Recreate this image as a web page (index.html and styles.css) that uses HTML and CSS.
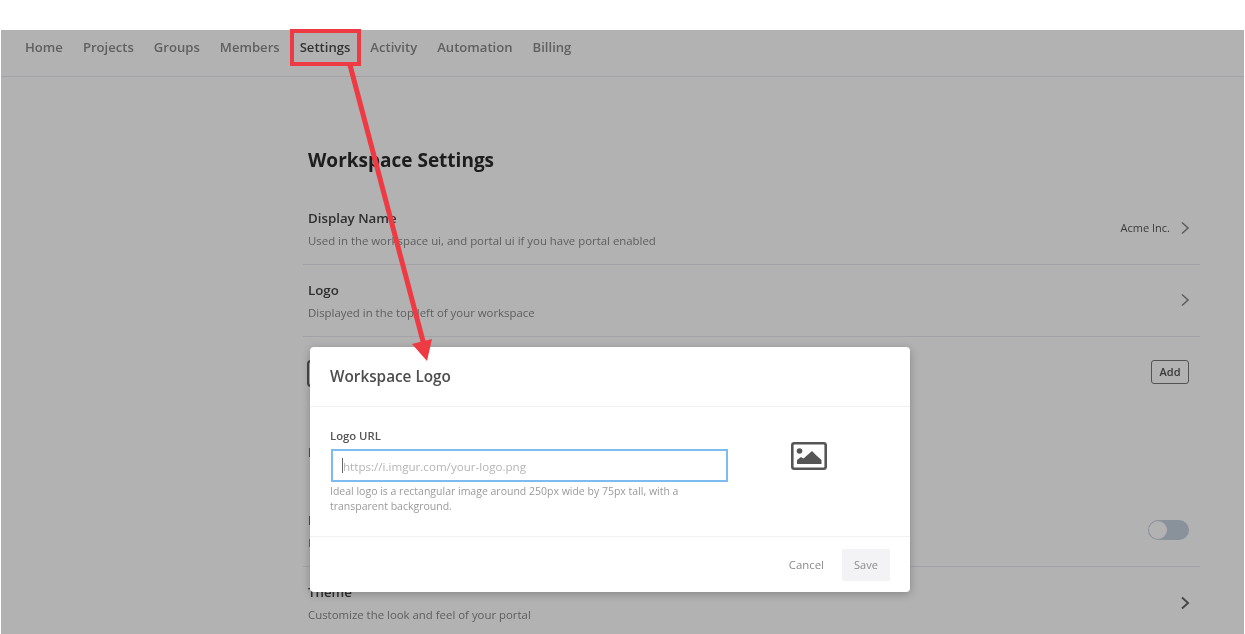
FILE: index.html
```html
<!DOCTYPE html>
<html lang="en">
<head>
    <meta charset="UTF-8">
    <meta name="viewport" content="width=device-width, initial-scale=1.0">
    <title>Workspace Settings</title>
    <link rel="stylesheet" href="styles.css">
</head>
<body>
    <div class="shot">
        <div class="app">
            <div class="nav">
                <a href="#">Home</a>
                <a href="#">Projects</a>
                <a href="#">Groups</a>
                <a href="#">Members</a>
                <a href="#" class="active">Settings</a>
                <a href="#">Activity</a>
                <a href="#">Automation</a>
                <a href="#">Billing</a>
            </div>

            <div class="content">
                <h1>Workspace Settings</h1>

                <div class="row">
                    <div>
                        <div class="row-title">Display Name</div>
                        <div class="row-desc">Used in the workspace ui, and portal ui if you have portal enabled</div>
                    </div>
                    <div class="row-side">
                        <span>Acme Inc.</span>
                        <svg class="chevron" viewBox="0 0 10 14"><path d="M2 1.5 8 7l-6 5.5"/></svg>
                    </div>
                </div>

                <div class="row">
                    <div>
                        <div class="row-title">Logo</div>
                        <div class="row-desc">Displayed in the top left of your workspace</div>
                    </div>
                    <div class="row-side">
                        <svg class="chevron" viewBox="0 0 10 14"><path d="M2 1.5 8 7l-6 5.5"/></svg>
                    </div>
                </div>

                <div class="row row-plain">
                    <div class="logo-box"></div>
                    <button class="add-btn">Add</button>
                </div>

                <div class="row row-plain row-tall">
                    <div class="row-title">Portal</div>
                </div>

                <div class="row">
                    <div>
                        <div class="row-title">Portal</div>
                        <div class="row-desc">Portal</div>
                    </div>
                    <div class="toggle"><span class="knob"></span></div>
                </div>

                <div class="row">
                    <div>
                        <div class="row-title">Theme</div>
                        <div class="row-desc">Customize the look and feel of your portal</div>
                    </div>
                    <div class="row-side row-side-theme">
                        <svg class="chevron chevron-dark" viewBox="0 0 10 14"><path d="M2 1.5 8 7l-6 5.5"/></svg>
                    </div>
                </div>
            </div>
        </div>

        <div class="backdrop"></div>

        <div class="modal">
            <div class="modal-header">Workspace Logo</div>
            <div class="modal-body">
                <div class="field">
                    <label class="field-label">Logo URL</label>
                    <div class="input">
                        <span class="caret"></span>
                        <span class="placeholder">https://i.imgur.com/your-logo.png</span>
                    </div>
                    <p class="hint">Ideal logo is a rectangular image around 250px wide by 75px tall, with a transparent background.</p>
                </div>
                <svg class="image-icon" viewBox="0 0 36 28">
                    <rect x="1.3" y="1.3" width="33.4" height="25.4" rx="2" fill="none" stroke="#555" stroke-width="2.6"/>
                    <circle cx="8.5" cy="9" r="2.8" fill="#555"/>
                    <path d="M6 22v-4l4-3 2.5 1.5L21 9l5 5 4.5 4v4z" fill="#555"/>
                </svg>
            </div>
            <div class="modal-footer">
                <a href="#" class="cancel">Cancel</a>
                <button class="save">Save</button>
            </div>
        </div>

        <!-- annotation drawn on top of the screenshot -->
        <svg class="annotation" viewBox="0 0 1245 634">
            <rect x="292" y="31" width="67" height="33" fill="none" stroke="#ee3a43" stroke-width="4"/>
            <path d="M350 65 424 345" fill="none" stroke="#ee3a43" stroke-width="5"/>
            <path d="M412 344 432 339 427 361z" fill="#ee3a43"/>
        </svg>
    </div>
</body>
</html>
```

FILE: styles.css
```css
* {
    box-sizing: border-box;
}
html, body {
    margin: 0;
    padding: 0;
    background: #fff;
}
body {
    font-family: "Open Sans", "Noto Sans", Arial, sans-serif;
    color: #333;
    overflow: hidden;
}

.shot {
    position: relative;
    width: 1245px;
    height: 634px;
    padding-top: 30px;
    overflow: hidden;
    filter: blur(0.6px);
}
.app {
    height: 604px;
    margin: 0 1px;
    background: #fff;
    overflow: hidden;
}

.nav {
    display: flex;
    align-items: center;
    gap: 20px;
    height: 47px;
    padding: 0 0 13px 24px;
    border-bottom: 1px solid #e8e8f0;
}
.nav a {
    font-size: 13.1px;
    font-weight: 600;
    color: #8a8a8a;
    text-decoration: none;
}
.nav a.active {
    color: #4a4a4a;
}

.content {
    width: 897px;
    margin-left: 302px;
}
.content h1 {
    margin: 0;
    padding: 70px 0 0 5px;
    height: 116px;
    font-size: 19px;
    line-height: 27px;
    font-weight: 700;
    color: #2a2a2a;
}

.row {
    display: flex;
    align-items: center;
    justify-content: space-between;
    height: 72px;
    padding: 0 10px 0 5px;
    border-bottom: 1px solid #e8e8f0;
}
.row-plain {
    border-bottom: none;
}
.row-tall {
    height: 86px;
}
.row-title {
    font-size: 13.3px;
    line-height: 18px;
    font-weight: 600;
    color: #444;
}
.row-desc {
    margin-top: 6px;
    font-size: 11.4px;
    line-height: 15px;
    color: #888;
}
.row-side {
    display: flex;
    align-items: center;
    gap: 10px;
    margin-bottom: 2px;
    font-size: 11px;
    color: #555;
}
.row-side-theme {
    margin-bottom: 0;
}

.chevron {
    width: 10px;
    height: 14px;
    fill: none;
    stroke: #888;
    stroke-width: 1.6;
}
.chevron-dark {
    stroke: #666;
    stroke-width: 2;
}

.logo-box {
    width: 40px;
    height: 27px;
    margin-left: -1px;
    border: 2px solid #666;
    border-radius: 4px;
}
.add-btn {
    width: 38px;
    height: 24px;
    margin: 0 1px 3px 0;
    padding: 0;
    font-family: inherit;
    font-size: 11px;
    font-weight: 600;
    color: #555;
    background: #fff;
    border: 1px solid #777;
    border-radius: 3px;
}

.toggle {
    display: flex;
    align-items: center;
    width: 41px;
    height: 20px;
    margin: 0 1px 2px 0;
    padding: 0 1px;
    background: #c5d0de;
    border-radius: 10px;
}
.knob {
    width: 18px;
    height: 18px;
    background: #fff;
    border-radius: 50%;
}

.backdrop {
    position: absolute;
    top: 30px;
    left: 1px;
    right: 1px;
    bottom: 0;
    background: rgba(0, 0, 0, 0.3);
}

.modal {
    position: absolute;
    top: 347px;
    left: 310px;
    width: 600px;
    height: 245px;
    background: #fff;
    border-radius: 4px;
    box-shadow: 0 2px 8px rgba(0, 0, 0, 0.25);
}
.modal-header {
    display: flex;
    align-items: center;
    height: 60px;
    padding: 0 20px 2px;
    font-size: 15.3px;
    font-weight: 600;
    color: #4d4d4d;
    border-bottom: 1px solid #f0f0f5;
}
.modal-body {
    display: flex;
    height: 130px;
    padding: 21px 20px 0;
    border-bottom: 1px solid #f0f0f5;
}
.field {
    width: 398px;
}
.field-label {
    display: block;
    font-size: 11.3px;
    line-height: 15px;
    font-weight: 600;
    color: #555;
}
.input {
    display: flex;
    align-items: center;
    width: 397px;
    height: 33px;
    margin: 6px 0 0 1px;
    padding-left: 9px;
    border: 2px solid #7dbcf0;
}
.caret {
    width: 1px;
    height: 15px;
    background: #666;
}
.placeholder {
    font-size: 11.6px;
    padding-top: 1px;
    color: #b5b5b5;
}
.hint {
    width: 370px;
    margin: 2px 0 0;
    font-size: 10.5px;
    line-height: 15px;
    color: #9a9a9a;
}
.image-icon {
    width: 36px;
    height: 28px;
    margin: 14px 0 0 63px;
}

.modal-footer {
    display: flex;
    align-items: center;
    justify-content: flex-end;
    gap: 18px;
    height: 55px;
    padding: 0 20px;
}
.cancel {
    font-size: 11.4px;
    color: #8a8a8a;
    text-decoration: none;
}
.save {
    width: 48px;
    height: 32px;
    padding: 0;
    font-family: inherit;
    font-size: 11px;
    color: #8a8a8a;
    background: #f3f3f6;
    border: none;
}

.annotation {
    position: absolute;
    top: 0;
    left: 0;
    width: 1245px;
    height: 634px;
}
```
